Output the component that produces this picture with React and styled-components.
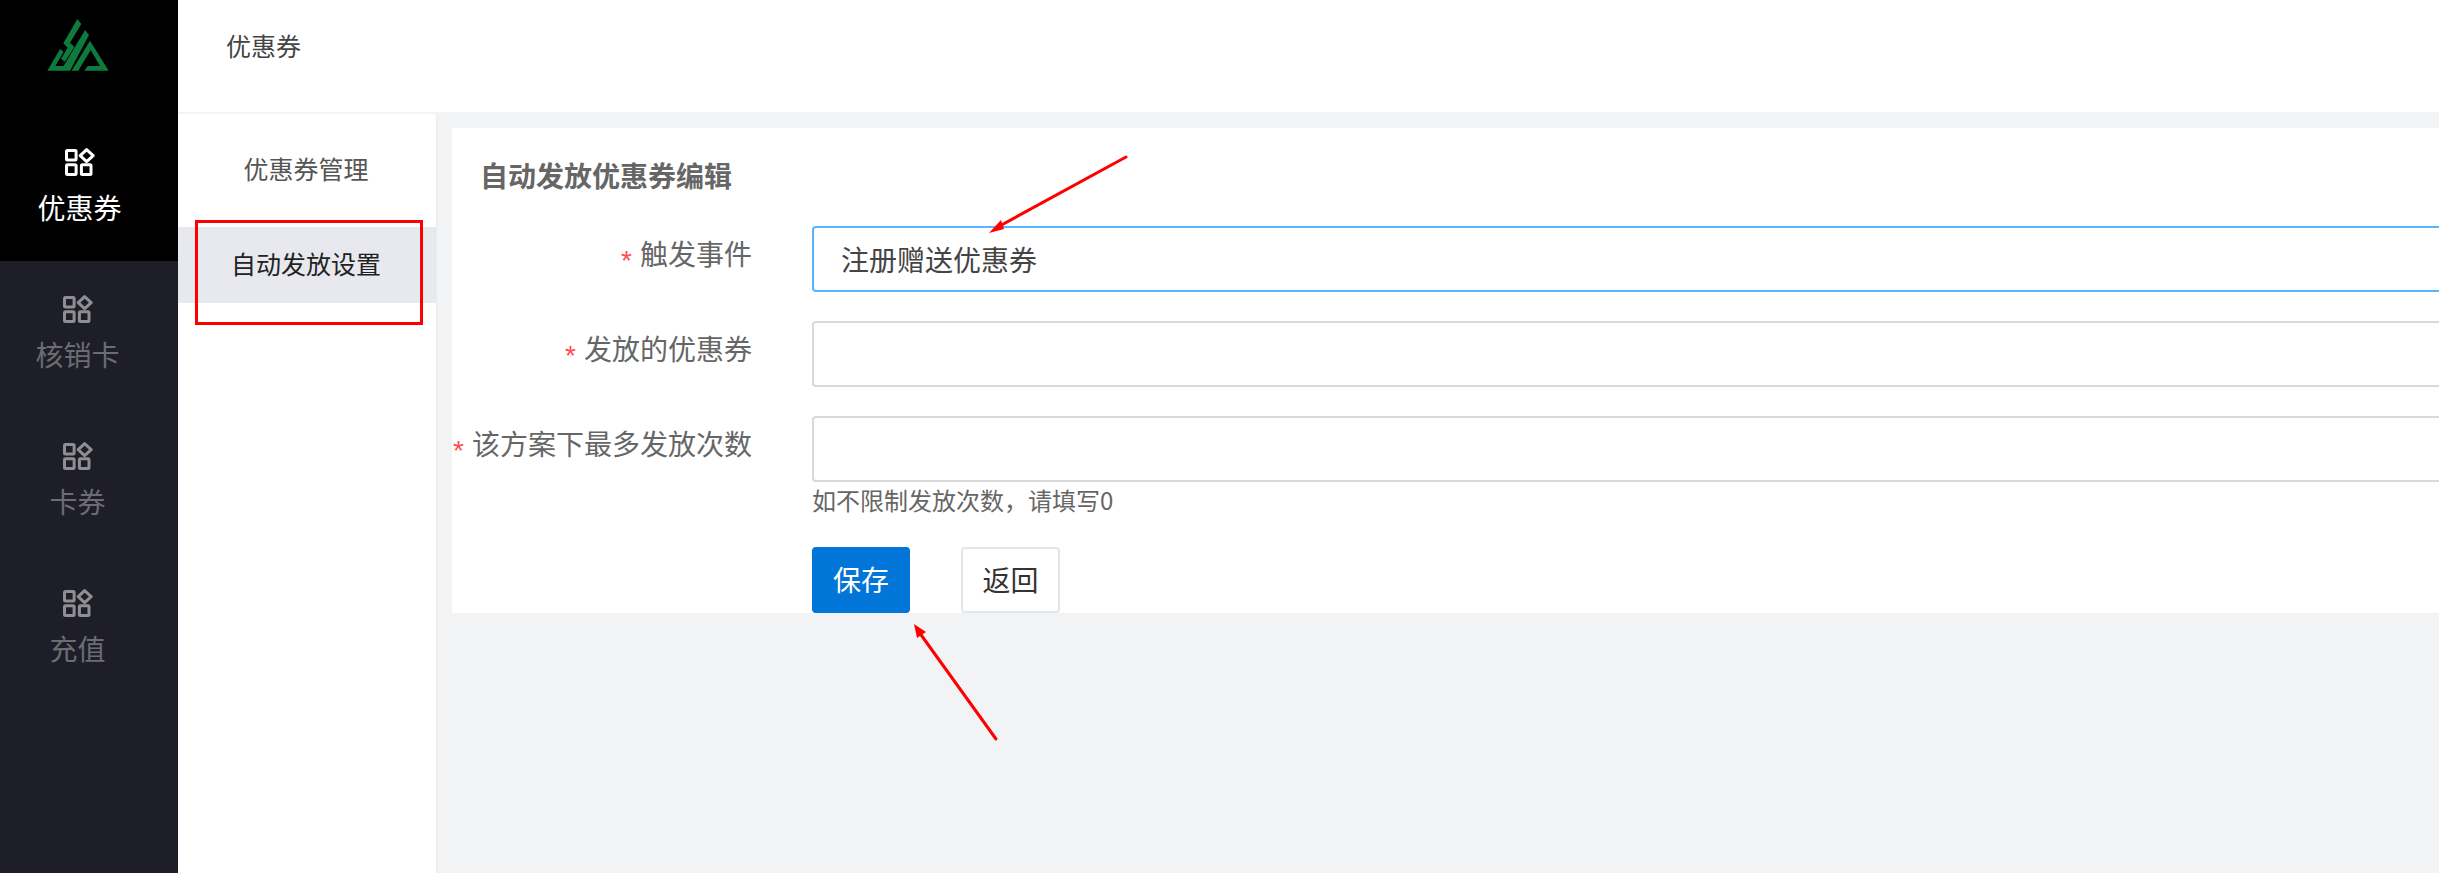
import React from "react";
import styled, { createGlobalStyle } from "styled-components";

const Global = createGlobalStyle`
  html, body { margin: 0; padding: 0; height: 100%; overflow: hidden; background: #f2f3f5; }
  * { box-sizing: border-box; }
  body { font-family: "Noto Sans CJK SC", "Liberation Sans", sans-serif; }
`;

const Page = styled.div`
  position: relative;
  display: flex;
  width: 2439px;
  height: 873px;
  overflow: hidden;
`;

const Sidebar = styled.aside`
  width: 178px;
  flex: none;
  background: #1e1e28;
  display: flex;
  flex-direction: column;
`;

const LogoArea = styled.div`
  height: 114px;
  background: #000;
  padding-left: 20px;
`;

const NavItem = styled.div`
  height: 147px;
  padding: 34px ${(p) => (p.$active ? "19px" : "23px")} 0 0;
  display: flex;
  flex-direction: column;
  align-items: center;
  background: ${(p) => (p.$active ? "#000" : "transparent")};
  color: ${(p) => (p.$active ? "#fff" : "#6c6c72")};
`;

const IconWrap = styled.span`
  display: block;
  height: 28px;
  color: ${(p) => (p.$active ? "#fff" : "#8e8e93")};
`;

const NavLabel = styled.span`
  font-size: 28px;
  line-height: 42px;
  margin-top: 10px;
`;

const Content = styled.div`
  flex: 1;
  display: flex;
  flex-direction: column;
  min-width: 0;
`;

const TopBar = styled.header`
  height: 112px;
  flex: none;
  background: #fff;
  padding-left: 48px;
  font-size: 25px;
  line-height: 90px;
  color: #444;
`;

const Body = styled.div`
  flex: 1;
  display: flex;
  margin-top: 2px;
`;

const SubNav = styled.nav`
  width: 259px;
  flex: none;
  background: #fff;
  border-right: 1px solid #eaebed;
  padding-top: 18px;
  display: flex;
  flex-direction: column;
  gap: 19px;
`;

const SubItem = styled.div`
  height: 76px;
  line-height: 73px;
  text-align: center;
  font-size: 25px;
  padding-right: 2px;
  color: ${(p) => (p.$active ? "#222" : "#555")};
  background: ${(p) => (p.$active ? "#e8e9ee" : "transparent")};
`;

const Main = styled.main`
  flex: 1;
  min-width: 0;
  margin-top: -2px;
  padding: 16px 0 0 15px;
  background: #f2f3f5;
  overflow: hidden;
`;

const Card = styled.section`
  width: 2100px;
  background: #fff;
  padding-top: 28px;
`;

const Title = styled.h2`
  margin: 0 0 31px 28px;
  font-size: 28px;
  line-height: 39px;
  font-weight: 700;
  color: #666;
`;

const Row = styled.div`
  display: grid;
  grid-template-columns: 300px 1fr;
  column-gap: 60px;
  margin-bottom: ${(p) => (p.$tight ? "0" : "29px")};
`;

const Label = styled.label`
  font-size: 28px;
  line-height: 54px;
  text-align: right;
  color: #666;
  white-space: nowrap;
`;

const Star = styled.span`
  font-family: "Liberation Sans", sans-serif;
  color: #ff4d4f;
  font-size: 28px;
  line-height: 0;
  vertical-align: -5px;
  margin-right: 8px;
`;

const Field = styled.input`
  display: block;
  width: 100%;
  height: 66px;
  padding: 0 27px;
  border: 2px solid ${(p) => (p.$focus ? "#5cb3fd" : "#d9d9d9")};
  border-radius: 4px;
  outline: none;
  background: #fff;
  font: inherit;
  font-size: 28px;
  color: #444;
`;

const Hint = styled.div`
  font-size: 24px;
  line-height: 36px;
  margin-bottom: 2px;
  color: #666;
`;

const Actions = styled.div`
  display: flex;
  gap: 51px;
  margin: 27px 0 0 360px;
`;

const Button = styled.button`
  width: ${(p) => (p.$primary ? "98px" : "99px")};
  height: 66px;
  padding: 0 0 3px;
  border-radius: 4px;
  border: 2px solid ${(p) => (p.$primary ? "#0275d8" : "#e4e5e9")};
  background: ${(p) => (p.$primary ? "#0275d8" : "#fff")};
  color: ${(p) => (p.$primary ? "#fff" : "#333")};
  font: inherit;
  font-size: 28px;
`;

const RedBox = styled.div`
  position: absolute;
  left: 195px;
  top: 220px;
  width: 228px;
  height: 105px;
  border: 3px solid #f00;
  pointer-events: none;
`;

const Overlay = styled.svg`
  position: absolute;
  inset: 0;
  pointer-events: none;
`;

const GridIcon = () => (
  <svg width="30" height="28" viewBox="0 0 30 28" fill="none" stroke="currentColor" strokeWidth="3" strokeLinejoin="round">
    <rect x="1.5" y="2.5" width="9.6" height="9.6" rx="1" />
    <rect x="1.5" y="16.8" width="9.6" height="9.6" rx="1" />
    <rect x="16.4" y="16.8" width="9.6" height="9.6" rx="1" />
    <path d="M21.6 1.6 L28.2 7.6 L21.6 13.6 L15.2 7.6 Z" />
  </svg>
);

const Logo = () => (
  <svg width="120" height="90" viewBox="0 0 360 270" fill="#0e7a3e">
    <polygon points="172,57 184,72 150,128 163,141 135,185 123,176 143,143 130,130" />
    <polygon points="120,147 131,155 106,198 131,198 195,90 207,105 150,212 82,212" />
    <polygon points="155,212 210,122 266,212 193,212 203,198 240,198 212,150 175,212" />
  </svg>
);

const items = ["优惠券", "核销卡", "卡券", "充值"];

export default function App() {
  return (
    <Page>
      <Global />
      <Sidebar>
        <LogoArea>
          <Logo />
        </LogoArea>
        {items.map((t, i) => (
          <NavItem key={t} $active={i === 0}>
            <IconWrap $active={i === 0}>
              <GridIcon />
            </IconWrap>
            <NavLabel>{t}</NavLabel>
          </NavItem>
        ))}
      </Sidebar>
      <Content>
        <TopBar>优惠券</TopBar>
        <Body>
          <SubNav>
            <SubItem>优惠券管理</SubItem>
            <SubItem $active>自动发放设置</SubItem>
          </SubNav>
          <Main>
            <Card>
              <Title>自动发放优惠券编辑</Title>
              <Row>
                <Label><Star>*</Star>触发事件</Label>
                <Field $focus readOnly value="注册赠送优惠券" />
              </Row>
              <Row>
                <Label><Star>*</Star>发放的优惠券</Label>
                <Field readOnly value="" />
              </Row>
              <Row $tight>
                <Label><Star>*</Star>该方案下最多发放次数</Label>
                <div>
                  <Field readOnly value="" />
                  <Hint>如不限制发放次数，请填写0</Hint>
                </div>
              </Row>
              <Actions>
                <Button $primary>保存</Button>
                <Button>返回</Button>
              </Actions>
            </Card>
          </Main>
        </Body>
      </Content>
      <RedBox />
      <Overlay width="2439" height="873" viewBox="0 0 2439 873">
        <line x1="1126" y1="157" x2="996" y2="228" stroke="#f00" strokeWidth="3" strokeLinecap="round" />
        <polygon points="989,233 1001,220 1004,229" fill="#f00" />
        <line x1="996" y1="739" x2="919" y2="632" stroke="#f00" strokeWidth="3" strokeLinecap="round" />
        <polygon points="914,624 926,632 917,638" fill="#f00" />
      </Overlay>
    </Page>
  );
}
